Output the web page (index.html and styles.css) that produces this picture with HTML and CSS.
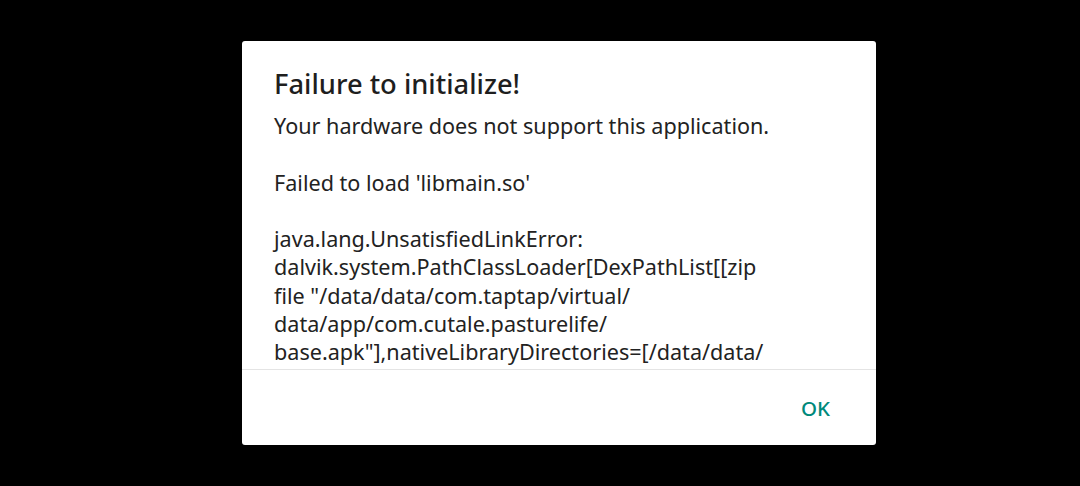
FILE: index.html
```html
<!DOCTYPE html>
<html>
<head>
<meta charset="utf-8">
<link rel="stylesheet" href="styles.css">
</head>
<body>
<div class="screen">
  <div class="dialog">
    <h1 class="title">Failure to initialize!</h1>
    <div class="message">
      <p>Your hardware does not support this application.</p>
      <p>Failed to load 'libmain.so'</p>
      <p>java.lang.UnsatisfiedLinkError:<br>dalvik.system.PathClassLoader[DexPathList[[zip<br>file "/data/data/com.taptap/virtual/<br>data/app/com.cutale.pasturelife/<br>base.apk"],nativeLibraryDirectories=[/data/data/</p>
    </div>
    <div class="actions">
      <button class="btn">OK</button>
    </div>
  </div>
</div>
</body>
</html>
```
FILE: styles.css
```css
html, body {
  margin: 0;
  padding: 0;
  background: #000;
  width: 1080px;
  height: 486px;
  overflow: hidden;
}
.screen {
  width: 1080px;
  height: 486px;
  display: flex;
  align-items: center;
  justify-content: center;
  padding-left: 38px;
  box-sizing: border-box;
}
.dialog {
  width: 634px;
  height: 404px;
  background: #fff;
  border-radius: 3px;
  display: flex;
  flex-direction: column;
  font-family: "Noto Sans", sans-serif;
  color: #222;
}
.title {
  margin: 0;
  padding: 26px 32px 0 32px;
  font-size: 27.3px;
  font-weight: 500;
  line-height: 34px;
  color: #1e1e1e;
}
.message {
  flex: 1;
  overflow: hidden;
  padding: 11px 32px 0 32px;
  font-size: 21.6px;
  line-height: 28.3px;
  border-bottom: 1px solid #e4e4e4;
}
.message p {
  margin: 0 0 28.3px 0;
}
.actions {
  height: 75px;
  display: flex;
  align-items: center;
  justify-content: flex-end;
  padding-right: 32px;
}
.btn {
  background: none;
  border: none;
  font-family: "Noto Sans", sans-serif;
  font-size: 20.5px;
  font-weight: 500;
  color: #00897b;
  padding: 4px 14px;
}
```
